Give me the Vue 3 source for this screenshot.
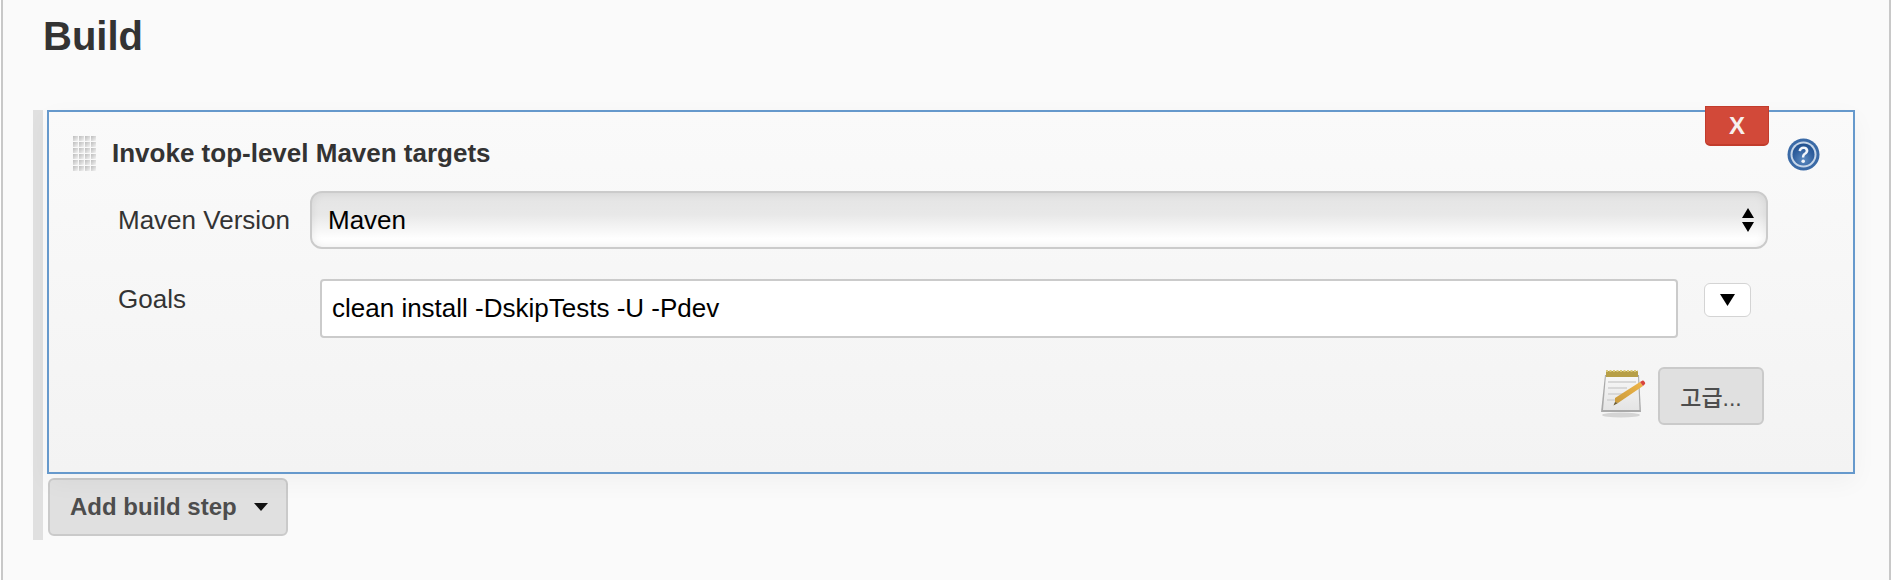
<script setup>
import { ref } from "vue";

const goals = ref("clean install -DskipTests -U -Pdev");
const version = ref("Maven");

// dots of the drag grip, 4 across and 6 down
const gripDots = [];
for (let r = 0; r < 6; r++) {
  for (let c = 0; c < 4; c++) gripDots.push({ x: c * 6, y: r * 6 });
}
</script>

<template>
  <div class="page">
    <h1 class="title">Build</h1>

    <div class="section">
      <div class="card">
        <button class="delete">X</button>

        <div class="card-head">
          <svg class="grip" width="24" height="36" viewBox="0 0 24 36">
            <defs>
              <linearGradient id="dot" x1="0" y1="0" x2="1" y2="1">
                <stop offset="0" stop-color="#bcbcbc" />
                <stop offset="1" stop-color="#f4f4f4" />
              </linearGradient>
            </defs>
            <rect
              v-for="(d, i) in gripDots"
              :key="i"
              :x="d.x"
              :y="d.y"
              width="5"
              height="5"
              fill="url(#dot)"
            />
          </svg>
          <span class="card-title">Invoke top-level Maven targets</span>
          <svg class="help" width="33" height="33" viewBox="0 0 33 33">
            <defs>
              <radialGradient id="ball" cx="0.5" cy="0.75" r="0.8">
                <stop offset="0" stop-color="#5f8dc2" />
                <stop offset="0.6" stop-color="#2f5f9e" />
                <stop offset="1" stop-color="#1f4f8c" />
              </radialGradient>
            </defs>
            <circle cx="16.5" cy="16.5" r="16" fill="#3a6aa6" />
            <circle cx="16.5" cy="16.5" r="13" fill="#c6d6e9" />
            <circle cx="16.5" cy="16.5" r="11" fill="url(#ball)" />
            <path
              d="M11.500 13c.3-3 2.400-4.600 5-4.600 2.800 0 4.900 1.600 4.900 4.100 0 2-1.100 2.900-2.400 3.900-1.200.9-1.700 1.400-1.700 3h-2.400c0-2.300.7-3.400 2.100-4.400 1-.8 1.600-1.300 1.600-2.300 0-1-.8-1.700-2.100-1.700-1.400 0-2.200.8-2.400 2.200z"
              fill="#f2f6fb"
            />
            <circle cx="16.200" cy="23.200" r="1.800" fill="#f2f6fb" />
          </svg>
        </div>

        <div class="row row-version">
          <label class="label">Maven Version</label>
          <div class="select-wrap">
            <select v-model="version" class="select">
              <option>Maven</option>
            </select>
            <svg class="arrows" width="12" height="24" viewBox="0 0 12 24">
              <path d="M6 0l6 10H0zM0 14h12L6 24z" fill="#000" />
            </svg>
          </div>
        </div>

        <div class="row row-goals">
          <label class="label label-top">Goals</label>
          <input v-model="goals" class="input" type="text" />
          <button class="expand">
            <svg width="15" height="12" viewBox="0 0 15 12">
              <path d="M0 0h15L7.500 12z" fill="#000" />
            </svg>
          </button>
        </div>

        <div class="row row-advanced">
          <svg class="notepad" width="46" height="48" viewBox="0 0 46 48">
            <defs>
              <linearGradient id="pencil" x1="0" y1="1" x2="1" y2="0">
                <stop offset="0" stop-color="#c99a3c" />
                <stop offset="1" stop-color="#f0b648" />
              </linearGradient>
              <linearGradient id="sheet" x1="0" y1="0" x2="0" y2="1">
                <stop offset="0" stop-color="#f8f8f8" />
                <stop offset="1" stop-color="#e4e4e4" />
              </linearGradient>
            </defs>
            <ellipse cx="21" cy="45" rx="19" ry="2.500" fill="#d4d4d4" />
            <path d="M5 5h34l2 37H1z" fill="#a9a9a9" />
            <path d="M6 5h32l1.500 35H3z" fill="url(#sheet)" />
            <rect x="6" y="1" width="32" height="6" fill="#b79f47" />
            <path d="M6 1h32" stroke="#d9c878" stroke-width="2" stroke-dasharray="2 1.500" />
            <path d="M8 12h28M8 18h19M8 24h16M7 30h10" stroke="#d8d8d8" stroke-width="2" />
            <path d="M15 32l3 1 25-17-3-4-25 16z" fill="url(#pencil)" />
            <path d="M15 32l-1.500 3.500 4.500-2.500z" fill="#6b5a2e" />
            <path d="M40 12l3 4 2-2c.6-1-.6-3.600-2.400-3.600z" fill="#d8443c" />
          </svg>
          <button class="advanced">고급...</button>
        </div>
      </div>

      <button class="add-step">
        Add build step
        <span class="caret"></span>
      </button>
    </div>
  </div>
</template>

<style>
html,
body {
  background: #fff;
}
</style>

<style scoped>
.page {
  box-sizing: border-box;
  width: 1890px;
  height: 580px;
  margin-left: 1px;
  border-left: 2px solid #c8c8c8;
  border-right: 2px solid #c8c8c8;
  background: #fafafa;
  font-family: "Liberation Sans", Arial, sans-serif;
  color: #333;
  overflow: hidden;
}

.title {
  margin: 0;
  height: 110px;
  padding: 14px 0 0 40px;
  box-sizing: border-box;
  font-size: 40px;
  line-height: 44px;
  font-weight: bold;
}

.section {
  margin-left: 30px;
  margin-right: 34px;
  padding: 0 0 4px 4px;
  border-left: 10px solid #e0e0e0;
}

.card {
  position: relative;
  box-sizing: border-box;
  height: 364px;
  padding: 23px 33px 0 24px;
  border: 2px solid #6699cc;
  background: linear-gradient(#fafafa, #f3f3f3);
  box-shadow: 0 8px 24px rgba(0, 0, 0, 0.04);
}

.delete {
  position: absolute;
  top: -6px;
  right: 84px;
  width: 64px;
  height: 40px;
  padding: 0;
  border: 1px solid #c23c2c;
  border-bottom-width: 2px;
  border-radius: 0 0 5px 5px;
  background: #d24939;
  color: #f7f0ee;
  font: bold 24px "Liberation Sans", Arial, sans-serif;
}

.card-head {
  display: flex;
  align-items: center;
  height: 36px;
  margin-bottom: 20px;
}

.grip {
  flex: none;
  margin-top: 2px;
  margin-right: 15px;
}

.card-title {
  flex: 1;
  font-size: 26px;
  font-weight: bold;
}

.help {
  flex: none;
  margin-top: 3px;
  filter: blur(0.5px);
}

.row {
  display: flex;
  margin-left: 45px;
  margin-right: 53px;
}

.label {
  flex: none;
  width: 192px;
  font-size: 26px;
  line-height: 58px;
}

.label-top {
  line-height: 40px;
}

.row-version {
  height: 58px;
  margin-bottom: 30px;
}

.select-wrap {
  position: relative;
  flex: 1;
  margin-right: -1px;
}

.select {
  appearance: none;
  box-sizing: border-box;
  width: 100%;
  height: 58px;
  padding: 0 16px;
  border: 2px solid #cbcbcb;
  border-radius: 12px;
  background: linear-gradient(#e4e4e4 0%, #e8e8e8 40%, #ffffff 85%);
  box-shadow: inset 0 0 10px rgba(0, 0, 0, 0.08);
  font: 26px "Liberation Sans", Arial, sans-serif;
  color: #000;
}

.arrows {
  position: absolute;
  top: 17px;
  right: 14px;
  pointer-events: none;
}

.row-goals {
  height: 59px;
  margin-bottom: 29px;
  align-items: flex-start;
}

.input {
  flex: 1;
  min-width: 0;
  box-sizing: border-box;
  height: 59px;
  margin-left: 10px;
  padding: 0 10px;
  border: 2px solid #cbcbcb;
  border-radius: 4px;
  background: #fff;
  font: 26px "Liberation Sans", Arial, sans-serif;
  color: #000;
  outline: none;
}

.expand {
  flex: none;
  display: flex;
  align-items: center;
  justify-content: center;
  box-sizing: border-box;
  width: 47px;
  height: 34px;
  margin: 4px 16px 0 26px;
  padding: 0;
  border: 1px solid #d4d4d4;
  border-radius: 6px;
  background: #fff;
}

.row-advanced {
  height: 58px;
  justify-content: flex-end;
  gap: 12px;
  padding-right: 3px;
}

.notepad {
  flex: none;
  margin-top: 3px;
  filter: blur(0.5px);
}

.advanced {
  box-sizing: border-box;
  width: 106px;
  height: 58px;
  padding: 0;
  border: 2px solid #cacaca;
  border-radius: 6px;
  background: #e0e0e0;
  color: #4d4d4d;
  font: 500 23px "Liberation Sans", "Noto Sans CJK KR", sans-serif;
}

.add-step {
  display: flex;
  align-items: center;
  box-sizing: border-box;
  width: 240px;
  height: 58px;
  margin: 4px 0 0 1px;
  padding: 0 0 0 20px;
  border: 2px solid #cacaca;
  border-radius: 6px;
  background: #e0e0e0;
  color: #4d4d4d;
  font: bold 24px "Liberation Sans", Arial, sans-serif;
}

.caret {
  width: 0;
  height: 0;
  margin-left: 17px;
  border-left: 7px solid transparent;
  border-right: 7px solid transparent;
  border-top: 8px solid #111;
}
</style>
